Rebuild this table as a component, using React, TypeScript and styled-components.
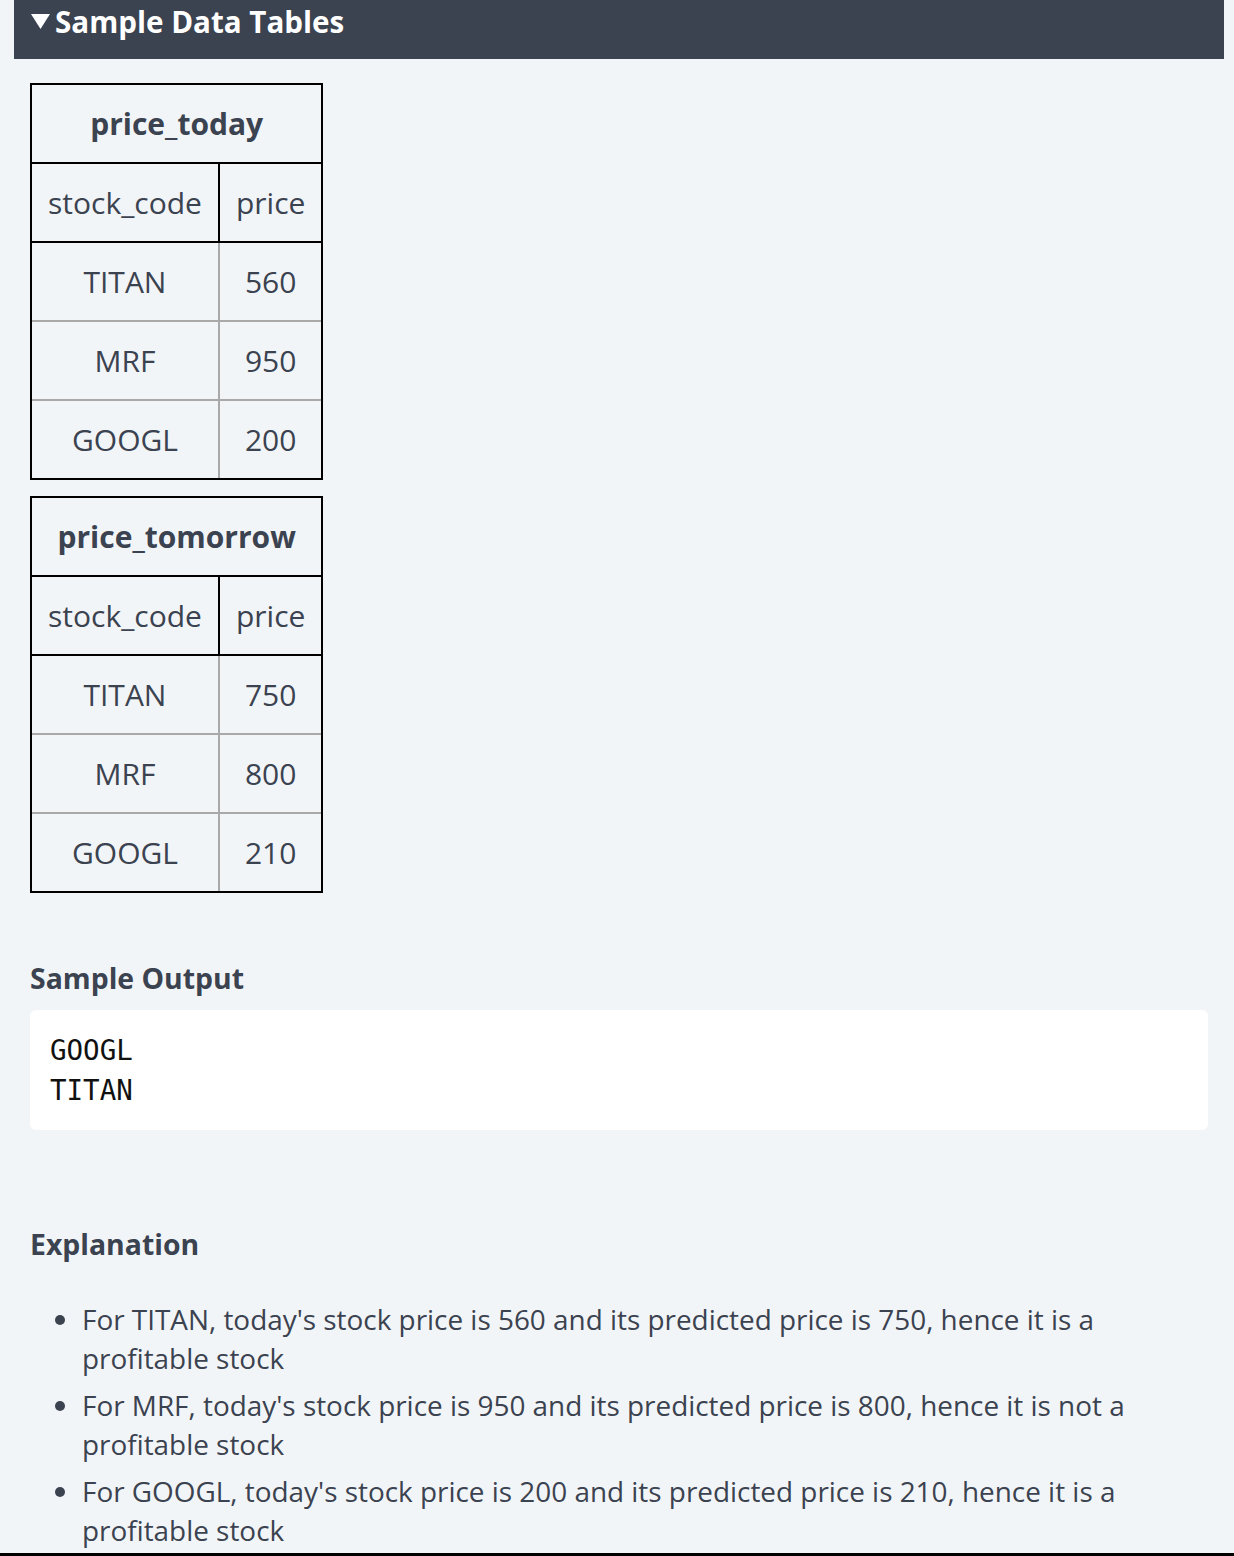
import React from 'react';
import styled, { createGlobalStyle } from 'styled-components';

const GlobalStyle = createGlobalStyle`
  html, body {
    margin: 0;
    padding: 0;
    background: #f2f5f7;
  }
  body {
    font-family: "Open Sans", "Noto Sans", sans-serif;
    color: #3b4250;
  }
`;

const Page = styled.div`
  padding: 0 10px 0 14px;
`;

const SectionBar = styled.div`
  display: flex;
  align-items: flex-start;
  gap: 5px;
  height: 59px;
  padding: 2px 0 0 17px;
  box-sizing: border-box;
  background: #3b4250;
  color: #fff;
`;

const BarTitle = styled.h2`
  margin: 0;
  font-size: 29.6px;
  font-weight: 700;
  line-height: 40px;
`;

const Marker = styled.svg`
  margin-top: 12px;
  flex: none;
`;

const Content = styled.div`
  padding: 24px 16px 0 16px;
`;

const Tables = styled.div`
  display: flex;
  flex-direction: column;
  align-items: flex-start;
  gap: 16px;
`;

const DataTable = styled.table`
  border-collapse: separate;
  border-spacing: 0;
  border: 2px solid #000;
  font-size: 30px;
  line-height: 40px;
`;

const TitleCell = styled.th`
  height: 79px;
  padding: 0 16px;
  box-sizing: border-box;
  border-bottom: 2px solid #000;
  font-weight: 700;
  text-align: center;
`;

const HeadCell = styled.td<{ $first?: boolean }>`
  height: 79px;
  padding: 0 16px;
  box-sizing: border-box;
  border-bottom: 2px solid #000;
  border-right: ${(p) => (p.$first ? '2px solid #000' : 'none')};
  text-align: center;
  font-weight: 400;
`;

const Cell = styled.td<{ $first?: boolean; $last?: boolean }>`
  height: ${(p) => (p.$last ? '77px' : '79px')};
  padding: 0 16px;
  box-sizing: border-box;
  border-bottom: ${(p) => (p.$last ? 'none' : '2px solid #a9a9a9')};
  border-right: ${(p) => (p.$first ? '2px solid #a9a9a9' : 'none')};
  text-align: center;
`;

const Heading = styled.h3<{ $top: number; $bottom: number }>`
  margin: ${(p) => p.$top}px 0 ${(p) => p.$bottom}px;
  font-size: 28.4px;
  font-weight: 700;
  line-height: 40px;
`;

const OutputBox = styled.pre`
  margin: 0;
  padding: 20px 20px;
  background: #fff;
  border-radius: 6px;
  font-family: "DejaVu Sans Mono", "Liberation Mono", monospace;
  font-size: 27.5px;
  line-height: 40px;
  color: #111;
`;

const List = styled.ul`
  margin: 0;
  padding-left: 52px;
  font-size: 27.9px;
  line-height: 39px;
`;

const Item = styled.li`
  margin-bottom: 8px;
  &:last-child {
    margin-bottom: 0;
  }
`;

const BottomRule = styled.div`
  margin-top: 3px;
  margin-left: -14px;
  margin-right: -10px;
  height: 4px;
  background: #000;
`;

type Row = [string, number];

const tables: { name: string; rows: Row[] }[] = [
  { name: 'price_today', rows: [['TITAN', 560], ['MRF', 950], ['GOOGL', 200]] },
  { name: 'price_tomorrow', rows: [['TITAN', 750], ['MRF', 800], ['GOOGL', 210]] },
];

const explanations = [
  "For TITAN, today's stock price is 560 and its predicted price is 750, hence it is a profitable stock",
  "For MRF, today's stock price is 950 and its predicted price is 800, hence it is not a profitable stock",
  "For GOOGL, today's stock price is 200 and its predicted price is 210, hence it is a profitable stock",
];

export default function App() {
  return (
    <>
      <GlobalStyle />
      <Page>
        <SectionBar>
          <Marker width="19" height="15" viewBox="0 0 19 15">
            <polygon points="0,0 19,0 9.5,15" fill="#fff" />
          </Marker>
          <BarTitle>Sample Data Tables</BarTitle>
        </SectionBar>
        <Content>
          <Tables>
            {tables.map((t) => (
              <DataTable key={t.name}>
                <thead>
                  <tr>
                    <TitleCell colSpan={2}>{t.name}</TitleCell>
                  </tr>
                </thead>
                <tbody>
                  <tr>
                    <HeadCell $first>stock_code</HeadCell>
                    <HeadCell>price</HeadCell>
                  </tr>
                  {t.rows.map(([code, price], i) => (
                    <tr key={code}>
                      <Cell $first $last={i === t.rows.length - 1}>{code}</Cell>
                      <Cell $last={i === t.rows.length - 1}>{price}</Cell>
                    </tr>
                  ))}
                </tbody>
              </DataTable>
            ))}
          </Tables>

          <Heading $top={65} $bottom={12}>Sample Output</Heading>
          <OutputBox>{'GOOGL\nTITAN'}</OutputBox>

          <Heading $top={94} $bottom={36}>Explanation</Heading>
          <List>
            {explanations.map((e) => (
              <Item key={e}>{e}</Item>
            ))}
          </List>
        </Content>
        <BottomRule />
      </Page>
    </>
  );
}
